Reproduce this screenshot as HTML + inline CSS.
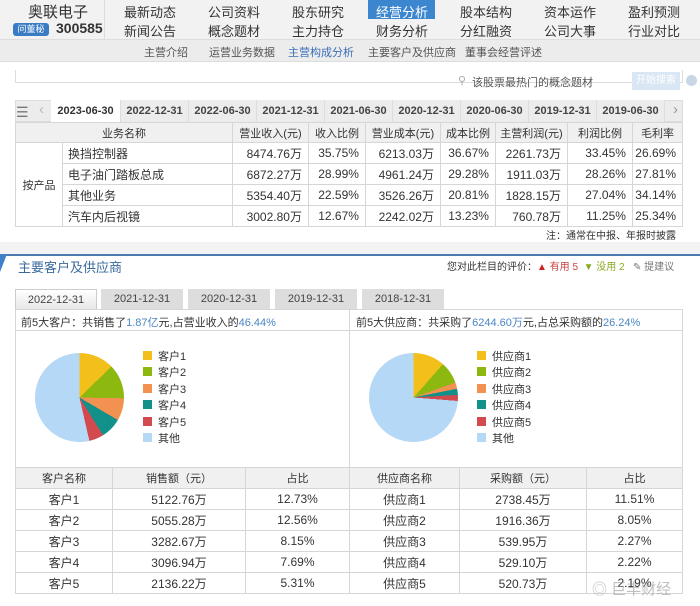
<!DOCTYPE html>
<html><head><meta charset="utf-8">
<style>
*{margin:0;padding:0;box-sizing:border-box}
body{width:700px;height:606px;overflow:hidden;background:#fff;font-family:"Liberation Sans","Noto Sans CJK SC",sans-serif;font-size:12px;color:#333;position:relative}
.a{position:absolute;white-space:nowrap}
.hdr{position:absolute;left:0;top:0;width:700px;height:40px;background:#f2f2f2;border-bottom:1px solid #ddd}
.nav{position:absolute;font-size:13px;color:#333;width:70px;text-align:center}
.sub{position:absolute;left:0;top:40px;width:700px;height:22px;background:#ececec;border-bottom:1px solid #ddd}
.sub span{position:absolute;top:4px;font-size:11px;color:#555}
table{border-collapse:collapse;position:absolute}
td{border:1px solid #d6d6d6;height:21px;font-size:12px}
.t1 td{text-align:right;padding-right:6px}
.t1 tr.h td{background:#f0f0f0;text-align:center;padding:0;font-size:11px;height:20px}
.tab{position:absolute;top:100px;height:22px;line-height:22px;font-size:11px;color:#444;background:#ececec;border-right:1px solid #ddd;text-align:center;font-weight:bold}
.dt{position:absolute;top:289px;height:21px;line-height:21px;font-size:11px;color:#444;background:#ddd;text-align:center;width:82px}
.t2 td{text-align:center}
.t2 tr.h td{background:#f0f0f0;font-size:11px;height:21px}
.sq{position:absolute;width:9px;height:9px}
.lg{position:absolute;font-size:11px;color:#333}
.pie{position:absolute;width:89px;height:89px;border-radius:50%}
</style></head><body>
<div class="hdr"></div>
<div class="a" style="left:28px;top:1px;font-size:15px;color:#333">奥联电子</div>
<div class="a" style="left:13px;top:23px;width:36px;height:13px;background:#3a7cc4;border-radius:3px;color:#fff;font-size:9px;line-height:13px;text-align:center">问董秘</div>
<div class="a" style="left:56px;top:20px;font-size:14px;font-weight:bold;color:#333">300585</div>
<div class="a" style="left:104px;top:0;width:1px;height:40px;background:#ddd"></div>
<div class="a" style="left:368px;top:0;width:67px;height:19px;background:#3c86d0"></div>
<div class="nav" style="left:115px;top:2px">最新动态</div><div class="nav" style="left:115px;top:21px">新闻公告</div>
<div class="nav" style="left:199px;top:2px">公司资料</div><div class="nav" style="left:199px;top:21px">概念题材</div>
<div class="nav" style="left:283px;top:2px">股东研究</div><div class="nav" style="left:283px;top:21px">主力持仓</div>
<div class="nav" style="left:367px;top:2px;color:#fff">经营分析</div><div class="nav" style="left:367px;top:21px">财务分析</div>
<div class="nav" style="left:451px;top:2px">股本结构</div><div class="nav" style="left:451px;top:21px">分红融资</div>
<div class="nav" style="left:535px;top:2px">资本运作</div><div class="nav" style="left:535px;top:21px">公司大事</div>
<div class="nav" style="left:619px;top:2px">盈利预测</div><div class="nav" style="left:619px;top:21px">行业对比</div>
<div class="sub"><span style="left:144px">主营介绍</span><span style="left:209px">运营业务数据</span><span style="left:288px;color:#3a70b8">主营构成分析</span><span style="left:368px">主要客户及供应商</span><span style="left:465px">董事会经营评述</span></div>
<div class="a" style="left:15px;top:70px;width:668px;height:13px;border-left:1px solid #ddd;border-right:1px solid #ddd;border-bottom:1px solid #ddd"></div>
<div class="a" style="left:458px;top:74px;font-size:11px;color:#aaa">⚲</div>
<div class="a" style="left:472px;top:74px;font-size:11px;color:#555">该股票最热门的概念题材</div>
<div class="a" style="left:632px;top:72px;width:48px;height:18px;background:#d9e6f3;color:#fff;font-size:10px;line-height:18px;text-align:center">开始搜索</div>
<div class="a" style="left:686px;top:75px;width:11px;height:11px;border-radius:50%;background:#c8d6e6"></div>
<div class="a" style="left:15px;top:100px;width:668px;height:22px;background:#ececec;border:1px solid #ddd"></div>
<div class="a" style="left:16px;top:104px;font-size:14px;color:#777">☰</div>
<div class="a" style="left:39px;top:101px;font-size:15px;color:#bbb">‹</div>
<div class="a" style="left:673px;top:101px;font-size:15px;color:#999">›</div>
<div class="tab" style="left:51px;width:70px;background:#fff;color:#333">2023-06-30</div>
<div class="tab" style="left:121px;width:68px">2022-12-31</div>
<div class="tab" style="left:189px;width:68px">2022-06-30</div>
<div class="tab" style="left:257px;width:68px">2021-12-31</div>
<div class="tab" style="left:325px;width:68px">2021-06-30</div>
<div class="tab" style="left:393px;width:68px">2020-12-31</div>
<div class="tab" style="left:461px;width:68px">2020-06-30</div>
<div class="tab" style="left:529px;width:68px">2019-12-31</div>
<div class="tab" style="left:597px;width:68px">2019-06-30</div>
<table class="t1" style="left:15px;top:122px;width:668px">
<tr class="h"><td colspan="2" style="width:209px">业务名称</td><td style="width:76px">营业收入(元)</td><td style="width:57px">收入比例</td><td style="width:75px">营业成本(元)</td><td style="width:55px">成本比例</td><td style="width:72px">主营利润(元)</td><td style="width:65px">利润比例</td><td>毛利率</td></tr>
<tr><td rowspan="4" style="width:47px;text-align:center;padding:0;font-size:11px">按产品</td><td style="text-align:left;padding-left:5px">换挡控制器</td><td>8474.76万</td><td>35.75%</td><td>6213.03万</td><td>36.67%</td><td>2261.73万</td><td>33.45%</td><td>26.69%</td></tr>
<tr><td style="text-align:left;padding-left:5px">电子油门踏板总成</td><td>6872.27万</td><td>28.99%</td><td>4961.24万</td><td>29.28%</td><td>1911.03万</td><td>28.26%</td><td>27.81%</td></tr>
<tr><td style="text-align:left;padding-left:5px">其他业务</td><td>5354.40万</td><td>22.59%</td><td>3526.26万</td><td>20.81%</td><td>1828.15万</td><td>27.04%</td><td>34.14%</td></tr>
<tr><td style="text-align:left;padding-left:5px">汽车内后视镜</td><td>3002.80万</td><td>12.67%</td><td>2242.02万</td><td>13.23%</td><td>760.78万</td><td>11.25%</td><td>25.34%</td></tr>
</table>
<div class="a" style="right:24px;top:227px;font-size:10px;color:#333">注：通常在中报、年报时披露</div>
<div class="a" style="left:0;top:242px;width:700px;height:12px;background:#f3f3f3"></div>
<div class="a" style="left:0;top:254px;width:700px;height:2px;background:#4a7bb0"></div>
<div class="a" style="left:0;top:254px;width:0;height:0;border-top:18px solid #3f80c8;border-right:7px solid transparent"></div>
<div class="a" style="left:18px;top:257px;font-size:13px;color:#3a6a9c">主要客户及供应商</div>
<div class="a" style="left:447px;top:258px;font-size:10px;color:#333">您对此栏目的评价：<span style="color:#c22">▲</span> <span style="color:#c44">有用 5</span> &nbsp;<span style="color:#8a2">▼</span> <span style="color:#8a2">没用 2</span> &nbsp; <span style="color:#777">✎ 提建议</span></div>
<div class="dt" style="left:15px;background:linear-gradient(#fff,#e6e6e6);border:1px solid #ccc;border-bottom:none">2022-12-31</div>
<div class="dt" style="left:101px">2021-12-31</div>
<div class="dt" style="left:188px">2020-12-31</div>
<div class="dt" style="left:275px">2019-12-31</div>
<div class="dt" style="left:362px">2018-12-31</div>
<div class="a" style="left:15px;top:309px;width:668px;height:159px;border:1px solid #d6d6d6"></div>
<div class="a" style="left:349px;top:309px;width:1px;height:159px;background:#d6d6d6"></div>
<div class="a" style="left:15px;top:330px;width:668px;height:1px;background:#d6d6d6"></div>
<div class="a" style="left:21px;top:314px;font-size:11px;color:#333">前5大客户：共销售了<span style="color:#4a86c5">1.87亿</span>元,占营业收入的<span style="color:#4a86c5">46.44%</span></div>
<div class="a" style="left:356px;top:314px;font-size:11px;color:#333">前5大供应商：共采购了<span style="color:#4a86c5">6244.60万</span>元,占总采购额的<span style="color:#4a86c5">26.24%</span></div>
<div class="pie" style="left:35px;top:353px;background:conic-gradient(#f3bf1b 0 12.73%,#8db80f 0 25.29%,#f39150 0 33.44%,#12908a 0 41.13%,#d24a4e 0 46.44%,#b4d8f5 0)"></div>
<div class="pie" style="left:369px;top:353px;background:conic-gradient(#f3bf1b 0 11.51%,#8db80f 0 19.56%,#f39150 0 21.83%,#12908a 0 24.05%,#d24a4e 0 26.24%,#b4d8f5 0)"></div>
<div class="sq" style="left:143px;top:351px;background:#f3bf1b"></div><div class="lg" style="left:158px;top:348px">客户1</div>
<div class="sq" style="left:143px;top:367px;background:#8db80f"></div><div class="lg" style="left:158px;top:364px">客户2</div>
<div class="sq" style="left:143px;top:384px;background:#f39150"></div><div class="lg" style="left:158px;top:381px">客户3</div>
<div class="sq" style="left:143px;top:400px;background:#12908a"></div><div class="lg" style="left:158px;top:397px">客户4</div>
<div class="sq" style="left:143px;top:417px;background:#d24a4e"></div><div class="lg" style="left:158px;top:414px">客户5</div>
<div class="sq" style="left:143px;top:433px;background:#b4d8f5"></div><div class="lg" style="left:158px;top:430px">其他</div>
<div class="sq" style="left:477px;top:351px;background:#f3bf1b"></div><div class="lg" style="left:492px;top:348px">供应商1</div>
<div class="sq" style="left:477px;top:367px;background:#8db80f"></div><div class="lg" style="left:492px;top:364px">供应商2</div>
<div class="sq" style="left:477px;top:384px;background:#f39150"></div><div class="lg" style="left:492px;top:381px">供应商3</div>
<div class="sq" style="left:477px;top:400px;background:#12908a"></div><div class="lg" style="left:492px;top:397px">供应商4</div>
<div class="sq" style="left:477px;top:417px;background:#d24a4e"></div><div class="lg" style="left:492px;top:414px">供应商5</div>
<div class="sq" style="left:477px;top:433px;background:#b4d8f5"></div><div class="lg" style="left:492px;top:430px">其他</div>
<table class="t2" style="left:15px;top:467px;width:668px">
<tr class="h"><td style="width:97px">客户名称</td><td style="width:133px">销售额（元）</td><td style="width:104px">占比</td><td style="width:110px">供应商名称</td><td style="width:127px">采购额（元）</td><td>占比</td></tr>
<tr><td>客户1</td><td>5122.76万</td><td>12.73%</td><td>供应商1</td><td>2738.45万</td><td>11.51%</td></tr>
<tr><td>客户2</td><td>5055.28万</td><td>12.56%</td><td>供应商2</td><td>1916.36万</td><td>8.05%</td></tr>
<tr><td>客户3</td><td>3282.67万</td><td>8.15%</td><td>供应商3</td><td>539.95万</td><td>2.27%</td></tr>
<tr><td>客户4</td><td>3096.94万</td><td>7.69%</td><td>供应商4</td><td>529.10万</td><td>2.22%</td></tr>
<tr><td>客户5</td><td>2136.22万</td><td>5.31%</td><td>供应商5</td><td>520.73万</td><td>2.19%</td></tr>
</table>
<div class="a" style="left:592px;top:578px;font-size:15px;color:rgba(150,150,150,0.6)">◎ 巨丰财经</div>
</body></html>
